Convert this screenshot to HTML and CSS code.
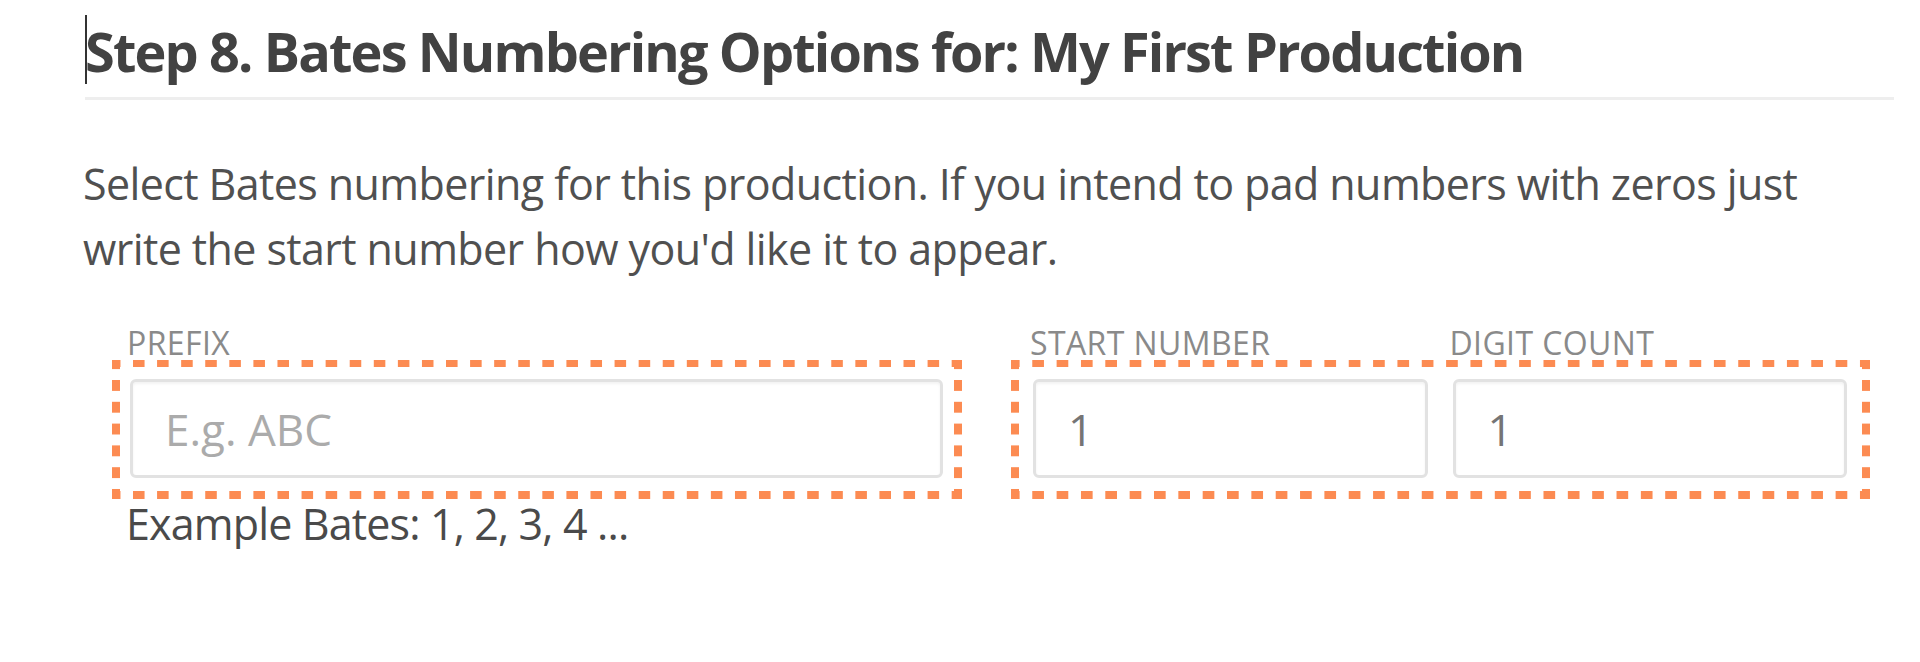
FILE: index.html
```html
<!DOCTYPE html>
<html lang="en">
<head>
<meta charset="utf-8">
<title>Bates Numbering Options</title>
<link rel="stylesheet" href="styles.css">
</head>
<body>
<div class="page">
  <h1 class="title">Step 8. Bates Numbering Options for: My First Production</h1>
  <p class="intro">Select Bates numbering for this production. If you intend to pad numbers with zeros just write the start number how you'd like it to appear.</p>
  <div class="fields">
    <div class="col col-prefix">
      <div class="labels labels-one"><label class="label" for="prefix">PREFIX</label></div>
      <div class="group group-prefix">
        <input class="input" id="prefix" type="text" placeholder="E.g. ABC">
      </div>
      <div class="example">Example Bates: 1, 2, 3, 4 ...</div>
    </div>
    <div class="col col-number">
      <div class="labels labels-two">
        <label class="label" for="start">START NUMBER</label>
        <label class="label" for="digits">DIGIT COUNT</label>
      </div>
      <div class="group group-number">
        <input class="input" id="start" type="text" value="1">
        <input class="input" id="digits" type="text" value="1">
      </div>
    </div>
  </div>
</div>
</body>
</html>
```
FILE: styles.css
```css
html, body {
  margin: 0;
  padding: 0;
  background: #ffffff;
}

body {
  font-family: "Open Sans", "Noto Sans", sans-serif;
  color: #4d4d4d;
}

.page {
  padding: 16px 26px 0 85px;
}

.title {
  position: relative;
  margin: 0;
  padding-bottom: 11px;
  border-bottom: 3px solid #eeeeee;
  font-size: 54px;
  line-height: 70px;
  font-weight: 700;
  letter-spacing: -1.85px;
  color: #424242;
}

.title::before {
  content: "";
  position: absolute;
  left: 0;
  top: -1px;
  width: 2px;
  height: 69px;
  background: #333333;
}

.intro {
  margin: 51px 0 44px -2px;
  font-size: 43px;
  line-height: 65px;
  letter-spacing: -0.6px;
  color: #505050;
}

.fields {
  display: flex;
  align-items: flex-start;
  gap: 49px;
  margin-left: 27px;
}

.col-prefix {
  width: 850px;
}

.col-number {
  width: 859px;
}

.labels {
  height: 35px;
}

.labels-one {
  padding-left: 18px;
}

.labels-two {
  display: grid;
  grid-template-columns: 1fr 1fr;
  column-gap: 25px;
  padding: 0 23px 0 22px;
}

.label {
  display: block;
  margin-left: -3px;
  font-size: 32px;
  line-height: 35px;
  letter-spacing: 0.4px;
  color: #8a8a8a;
  white-space: nowrap;
}

.group {
  box-sizing: border-box;
  height: 139px;
  border-style: solid;
  border-color: transparent;
  border-width: 7px 8px 8px 8px;
  background-origin: border-box;
  background-clip: border-box;
  background-image:
    linear-gradient(to right, #fc8b52 12px, transparent 12px),
    linear-gradient(to right, #fc8b52 12px, transparent 12px),
    linear-gradient(to bottom, #fc8b52 11px, transparent 11px),
    linear-gradient(to bottom, #fc8b52 11px, transparent 11px);
  background-repeat: repeat-x, repeat-x, repeat-y, repeat-y;
  background-position: -3.09px 0, -3.09px 100%, 0 -1.8px, 100% -1.8px;
}

.group-prefix {
  padding: 12px 11px 13px 10px;
  background-size: 24.09px 7px, 24.09px 8px, 8px 21.8px, 8px 21.8px;
}

.group-number {
  display: grid;
  grid-template-columns: 1fr 1fr;
  column-gap: 25px;
  padding: 12px 15px 13px 14px;
  background-size: 24.345px 7px, 24.345px 8px, 8px 21.8px, 8px 21.8px;
}

.input {
  display: block;
  box-sizing: border-box;
  width: 100%;
  height: 99px;
  margin: 0;
  padding: 0 0 0 32px;
  border: 3px solid #e2e2e2;
  border-radius: 6px;
  box-shadow: inset 0 2px 3px rgba(0, 0, 0, 0.05);
  background: #ffffff;
  font-family: "Open Sans", "Noto Sans", sans-serif;
  font-size: 44px;
  color: #757575;
  outline: none;
}

.input::placeholder {
  color: #ababab;
  opacity: 1;
}

.example {
  margin-left: 14px;
  font-size: 43px;
  line-height: 50px;
  letter-spacing: -0.85px;
  color: #4a4a4a;
  white-space: nowrap;
}
```
